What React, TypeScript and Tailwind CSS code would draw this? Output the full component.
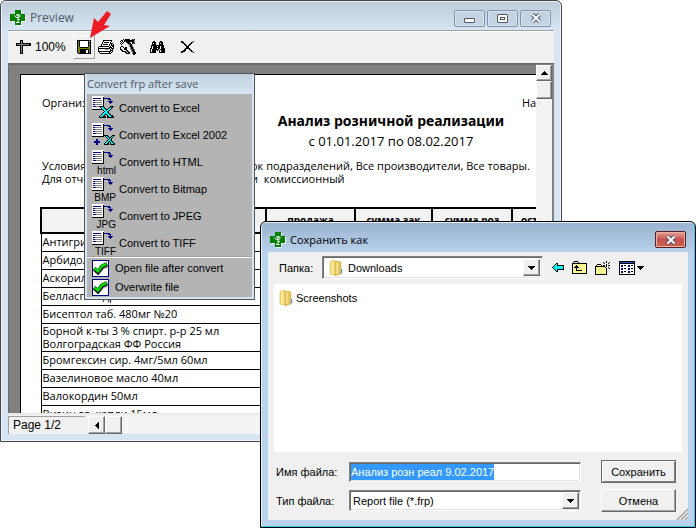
import type { ReactNode } from "react";

const COLORS: Record<string, string> = {
  k: "#000000",
  w: "#ffffff",
  g: "#808080",
  l: "#ffffc0",
  o: "#808000",
  n: "#000080",
  c: "#00ffff",
  t: "#008080",
  y: "#fff266",
  b: "#0a5bd0",
};

function PixelIcon({ rows, className }: { rows: string[]; className?: string }) {
  const width = Math.max(...rows.map((row) => row.length));
  return (
    <svg
      width={width}
      height={rows.length}
      viewBox={`0 0 ${width} ${rows.length}`}
      shapeRendering="crispEdges"
      aria-hidden="true"
      className={className}
    >
      {rows.flatMap((row, y) =>
        [...row].map((key, x) =>
          COLORS[key] ? (
            <rect key={`${x}-${y}`} x={x} y={y} width="1" height="1" fill={COLORS[key]} />
          ) : null,
        ),
      )}
    </svg>
  );
}

const RULER = [
  "....kkk........",
  "....kgk........",
  "....kgk........",
  "kkkkkgkkkkkkkkk",
  "kggggggggggggkk",
  "kkkkkgkkkkkkkkk",
  "....kgk........",
  "....kgk........",
  "....kgk........",
  "....kgk........",
  "....kgk........",
  "....kgk........",
  "....kgk........",
  "....kkk........",
];

const FLOPPY = [
  "kkkkkkkkkkkkkk",
  "kokwwwwwwwwkwk",
  "kokwwwwwwwwkkk",
  "kokwwwwwwwwkok",
  "kokwwwwwwwwkok",
  "kokwwwwwwwwkok",
  "kokwwwwwwwwkok",
  "kookkkkkkkkook",
  "kooooooooooook",
  "kookkkkkkkkkok",
  "kookkkkkkwwkok",
  "kookkkkkkwwkok",
  "kookkkkkkwwkok",
  ".kkkkkkkkkkkkk",
];

const PRINTER = [
  ".....kkkkkkkkk..",
  ".....kwwwwwwwk..",
  "....kwkkkkkwk...",
  "....kwwwwwwwkkk.",
  "...kwkkkkkwkwkwk",
  "...kwwwwwwwkwkkk",
  ".kkkkkkkkkkwkwkk",
  "kwwwwwwwwwwkkkwk",
  "kkkkkkkkkkkkwkkk",
  "kwwwwwwgggwwkwk.",
  "kwwwwwwwwwwwkkk.",
  "kkkkkkkkkkkkkwk.",
  ".kwwwwwwwwwkwk..",
  "..kkkkkkkkkkk...",
];

const TOOLS = [
  "...k.kkkkk..kgk.",
  ".kk.kkkkkkkkkkg.",
  "k.k.kgkkkkkkkkg.",
  ".k.k..gkkk..kkg.",
  "k.k....gkkk.kgk.",
  ".k......ggkk....",
  ".........gkkg...",
  ".kk......gkkg...",
  "k..k.kk...gkkg..",
  "k...kkk...gkkg..",
  "kk..kkk...ggkkg.",
  ".kk...kk...gkkg.",
  "..kkkk.kk..ggkk.",
  ".....kk.kk..gkkk",
  "......kkkk..gkkk",
  ".............kk.",
];

const BINOCULARS = [
  "...kk.....kk...",
  "..kkkk...kkkk..",
  "..kwkk...kwkk..",
  "..kkkk...kkkk..",
  ".kkkkkkkkkkkkk.",
  ".kwkkkkwkkwkkk.",
  ".kwkkkkkkkwkkk.",
  "kkwkkkkwkkwkkkk",
  "kwkkkkkkkwkkkkk",
  "kwkkkk.k.kwkkkk",
  "kwkkkk...kwkkkk",
  "kkkkkk...kkkkkk",
];

const CROSS = [
  "kk..........k",
  "kkk.......kk.",
  "..kk.....kk..",
  "...kk...kk...",
  "....kk.kk....",
  ".....kkk.....",
  ".....kkk.....",
  "....kkkkk....",
  "...kk...kk...",
  "..kkk....kk..",
  "kkkk......kk.",
  "kk..........k",
];

const PAGE_ARROW = [
  "wwwwwwwwwwww..........",
  "wwwwwwwwwwwk..........",
  "wnnnnnnnnwwknnnnnn....",
  "wwwwwwwwwwwk....nnn...",
  "wnngggggggwk......n...",
  "wwwwwwwwwwwk....nnnnn.",
  "wnngggggggwk.....nnn..",
  "wwwwwwwwwwwk......n...",
  "wnngggggggwk..........",
  "wwwwwwwwwwwk..........",
  "wnnnggggggwk..........",
  "wwwwwwwwwwwk..........",
  "wwwwwwwwwwwk..........",
  "kkkkkkkkkkkk..........",
];

const EXCEL = [
  "kkkkk......kkkk",
  ".kcctk....kttk.",
  "..kcctk..kcck..",
  "...kcctkkcck...",
  "....kcctcck....",
  ".....kcctk.....",
  "....kccctk.....",
  "...kcctcctk....",
  "..kcctkkcctk...",
  ".kcctk..kcctkk.",
  "kcctkkk.kkcctkk",
  "kkkkkkk.kkkkkkk",
];

const EXCEL_SMALL = [
  "kkkk....kkk",
  ".kctk..kck.",
  "..kctkkck..",
  "...kctck...",
  "....kctk...",
  "...kcctk...",
  "..kctkctk..",
  ".kcck.kctk.",
  "kcckk.kcctk",
  "kkkkk.kkkkk",
];

const PLUS = ["..nn..", "..nn..", "nnnnnn", "nnnnnn", "..nn..", "..nn.."];

const BACK = [
  "....kk......",
  "...kck......",
  "..kcckkkkkkk",
  ".kccccccccck",
  "kcccccccccck",
  ".kccccccccck",
  "..kcckkkkkkk",
  "...kck......",
  "....kk......",
];

const FOLDER_UP = [
  "..kkkk.........",
  ".kylylk........",
  "kkkkkkkkkkkkkkk",
  "kylylylylylylyk",
  "klylklylylylylk",
  "kylkkkylylylylk",
  "klkkkkklylylylk",
  "kylykylylylylyk",
  "klylklylylylyyk",
  "kylykkkkkkylylk",
  "klylylylylylylk",
  "kylylylylylylyk",
  "kkkkkkkkkkkkkkk",
];

const FOLDER_NEW = [
  "...........k....",
  "........k..k..k.",
  ".........k...k..",
  "..kkkk.....k....",
  ".kylylk.kk.k.kk.",
  "kkkkkkkkkk.k....",
  "kylylylylyk..k..",
  "klylylylylyk..k.",
  "kylylylylylk....",
  "klylylylylyk....",
  "kylylylylylk....",
  "klylylylylyk....",
  "kylylylylylk....",
  "kkkkkkkkkkkk....",
];

const DETAILS = [
  "kkkkkkkkkkkkkkkk",
  "kbbbbbbbbbbbbbbk",
  "kkkkkkkkkkkkkkkk",
  "kwwwwwwwwwwwwwwk",
  "kwnnwkkwwnnwkkwk",
  "kwnnwwwwwnnwwwwk",
  "kwwwwwwwwwwwwwwk",
  "kwnnwkkwwnnwkkwk",
  "kwnnwwwwwnnwwwwk",
  "kwwwwwwwwwwwwwwk",
  "kwnnwkkwwnnwkkwk",
  "kwnnwwwwwnnwwwwk",
  "kwwwwwwwwwwwwwwk",
  "kkkkkkkkkkkkkkkk",
];

const DOWN = ["kkkkkkk", ".kkkkk.", "..kkk..", "...k..."];
const UP = ["...k...", "..kkk..", ".kkkkk.", "kkkkkkk"];
const LEFT = ["...k", "..kk", ".kkk", "kkkk", ".kkk", "..kk", "...k"];

function AppIcon() {
  return (
    <svg width="16" height="16" viewBox="0 0 16 16" aria-hidden="true" className="shrink-0">
      <path d="M6 1h6v4h4v7h-4v4H6v-4H1V5h5z" fill="#fff" />
      <path d="M5 0h6v4h4v7h-4v4H5v-4H0V4h5z" fill="#008000" />
      <path d="M4.5 5.5 6 7.5h3l1.5-2M8 4v9M6 12.5h3.5M6 5h4M8 9.5h2" stroke="#fff" fill="none" />
    </svg>
  );
}

function FolderIcon() {
  return (
    <svg width="14" height="16" viewBox="0 0 14 16" aria-hidden="true" className="shrink-0">
      <path d="M1 1.5 5 0l1.5 1v14.5L1 14z" fill="#f3dc7e" stroke="#d9b64c" strokeWidth=".6" />
      <path d="M6 1.5h5l1 1V14l-5.5 1.5z" fill="#e7c65c" stroke="#cfa83c" strokeWidth=".6" />
      <path d="M3 1.5v12M8 2.5V14" stroke="#fdf3b8" />
      <path d="M12.5 9v4.5" stroke="#5b9bd5" strokeWidth="1.4" />
    </svg>
  );
}

function CheckMark() {
  return (
    <svg
      width="15"
      height="13"
      viewBox="0 0 15 13"
      aria-hidden="true"
      className="pointer-events-none absolute top-0.5 left-px"
    >
      <path d="m2 8.5 3 3 5-6L14.5 4" stroke="#808080" strokeWidth="3" fill="none" />
      <path d="m1 6.5 4 3.5 4-5.5L14 2" stroke="#000" strokeWidth="4" fill="none" />
      <path d="m1.5 6.5 3.5 3 4-5.5 4.5-2" stroke="#00e000" strokeWidth="2.5" fill="none" />
    </svg>
  );
}

const raised =
  "border border-t-white border-l-white border-r-[#696969] border-b-[#696969] bg-[#f0f0f0] shadow-[inset_-1px_-1px_0_#a0a0a0]";
const raisedDefault =
  "border border-[#696969] bg-[#f0f0f0] shadow-[inset_1px_1px_0_#ffffff,inset_-1px_-1px_0_#808080]";
const sunken =
  "border border-t-[#808080] border-l-[#808080] border-r-white border-b-white bg-white shadow-[inset_1px_1px_0_#696969,inset_-1px_-1px_0_#e3e3e3]";
const track =
  "bg-[conic-gradient(#ffffff_25%,#ececec_0_50%,#ffffff_0_75%,#ececec_0)] bg-[length:2px_2px]";

function CaptionButton({ label, children }: { label: string; children: ReactNode }) {
  return (
    <button
      type="button"
      aria-label={label}
      className="flex h-[17px] w-[31px] items-center justify-center rounded-xs border border-[#8391ad] bg-[#c6d3e2] shadow-[inset_0_0_0_1px_#d8e3ef]"
    >
      {children}
    </button>
  );
}

function CloseGlyph() {
  return (
    <svg width="12" height="10" viewBox="0 0 12 10" aria-hidden="true">
      <path d="m2.5 1.5 7 7m0-7-7 7" stroke="#50566b" strokeWidth="4" />
      <path d="m2.5 1.5 7 7m0-7-7 7" stroke="#fff" strokeWidth="2" />
    </svg>
  );
}

const products = [
  "Антигрип",
  "Арбидол",
  "Аскорил",
  "Белласпон др. № 30",
  "Бисептол таб. 480мг №20",
  "Борной к-ты 3 % спирт. р-р 25 мл\nВолгоградская ФФ Россия",
  "Бромгексин сир. 4мг/5мл 60мл",
  "Вазелиновое масло 40мл",
  "Валокордин 50мл",
  "Визин гл. капли 15мл",
];

function Report() {
  return (
    <article className="mt-[9px] ml-[11px] w-[640px] border-t border-l border-black bg-white pt-[21px] pl-[19px] font-['Open_Sans',sans-serif] text-[11px] leading-[13px]">
      <div className="flex pl-0.5">
        <span className="w-[480px]">Организа</span>
        <span>На</span>
      </div>
      <div className="mt-0.5 w-[702px] text-center">
        <h1 className="font-['Noto_Sans',sans-serif] text-[14px] leading-5 font-bold">
          Анализ розничной реализации
        </h1>
        <p className="text-[13px] leading-5">с 01.01.2017 по 08.02.2017</p>
      </div>
      <div className="mt-2 grid grid-cols-[209px_auto] pl-0.5 whitespace-pre">
        <span>Условия</span>
        <span>ок подразделений, Все производители, Все товары.</span>
        <span>Для отчет</span>
        <span>и{"  "}комиссионный</span>
      </div>
      <table className="mt-[22px] w-[560px] table-fixed border-collapse">
        <thead>
          <tr className="h-[25px] bg-[#f2f2f2] text-[10px]">
            <th className="w-[225px] border-2 border-black" />
            <th className="w-[89px] border-2 border-black">продажа</th>
            <th className="w-[77px] border-2 border-black">сумма зак</th>
            <th className="w-[80px] border-2 border-black">сумма роз</th>
            <th className="border-2 border-black pl-2 text-left">остаток</th>
          </tr>
        </thead>
        <tbody>
          {products.map((name) => (
            <tr key={name} className="h-[18px]">
              <td className="border border-black pb-px pl-px whitespace-pre">{name}</td>
              <td className="border border-black" />
              <td className="border border-black" />
              <td className="border border-black" />
              <td className="border border-black" />
            </tr>
          ))}
        </tbody>
      </table>
    </article>
  );
}

function ToolButton({ label, children }: { label: string; children: ReactNode }) {
  return (
    <button type="button" aria-label={label} className="flex h-6 items-center">
      {children}
    </button>
  );
}

function PreviewWindow() {
  return (
    <section className="absolute top-0 right-[134px] bottom-[86px] left-0 flex flex-col rounded-t-md border border-[#45454d] bg-[#d7e4f2] px-[7px] pb-[7px] shadow-[inset_0_0_0_1px_#eef4fa]">
      <header className="-mx-1.5 mt-px flex h-7 shrink-0 items-center rounded-t-sm bg-linear-to-b from-[#bfcddb] to-[#d7e4f2] pt-1 pr-[9px] pl-2">
        <AppIcon />
        <h2 className="ml-1 flex-1 font-['Open_Sans',sans-serif] text-[12px] leading-4 text-[#505a66]">
          Preview
        </h2>
        <div className="flex gap-0.5">
          <CaptionButton label="Minimize">
            <span className="mt-1 h-[5px] w-[11px] rounded-[1px] border border-[#50566b] bg-white" />
          </CaptionButton>
          <CaptionButton label="Maximize">
            <span className="flex h-[9px] w-[11px] items-center justify-center rounded-[1px] border border-[#50566b] bg-white">
              <span className="h-[3px] w-[5px] border border-[#50566b]" />
            </span>
          </CaptionButton>
          <CaptionButton label="Close">
            <CloseGlyph />
          </CaptionButton>
        </div>
      </header>
      <div className="flex h-[33px] shrink-0 items-center border-t border-[#a0a0a0] bg-[#f0f0f0] pl-2 shadow-[inset_0_1px_0_#ffffff]">
        <ToolButton label="Zoom">
          <PixelIcon rows={RULER} />
          <span className="ml-1 w-[38px] text-left text-[12px]">100%</span>
        </ToolButton>
        <button
          type="button"
          aria-label="Save"
          className="flex h-6 w-[22px] items-center justify-center border border-t-white border-r-[#a0a0a0] border-b-[#a0a0a0] border-l-white"
        >
          <PixelIcon rows={FLOPPY} />
        </button>
        <div className="ml-[3px] flex items-center">
          <ToolButton label="Print">
            <PixelIcon rows={PRINTER} className="mr-1.5" />
          </ToolButton>
          <ToolButton label="Page settings">
            <PixelIcon rows={TOOLS} className="mr-3.5" />
          </ToolButton>
          <ToolButton label="Find">
            <PixelIcon rows={BINOCULARS} className="mr-4" />
          </ToolButton>
          <ToolButton label="Close preview">
            <PixelIcon rows={CROSS} />
          </ToolButton>
        </div>
      </div>
      <div className="flex min-h-0 flex-1 border-t border-l border-[#696969] bg-[#808080]">
        <div className="min-w-0 flex-1 overflow-hidden border-t border-[#696969]">
          <Report />
        </div>
        <div className={`mt-px mr-0.5 flex w-4 flex-col ${track}`}>
          <button
            type="button"
            aria-label="Scroll up"
            className={`flex h-4 items-center justify-center ${raised}`}
          >
            <PixelIcon rows={UP} />
          </button>
          <div className={`h-[18px] ${raised}`} />
        </div>
      </div>
      <footer className="flex h-[21px] shrink-0 border-t border-[#e3e3e3] bg-[#f0f0f0] pt-0.5">
        <span className="w-[77px] border-t border-l border-[#a0a0a0] pl-1 text-[12px] leading-4">
          Page 1/2
        </span>
        <div className={`ml-[3px] flex flex-1 ${track}`}>
          <button
            type="button"
            aria-label="Scroll left"
            className={`flex w-[17px] items-center justify-center ${raised}`}
          >
            <PixelIcon rows={LEFT} />
          </button>
          <div className={`w-[17px] ${raised}`} />
        </div>
      </footer>
    </section>
  );
}

function FormatIcon({ tag }: { tag: string }) {
  return (
    <span className="relative h-6 w-6 shrink-0">
      <PixelIcon rows={PAGE_ARROW} />
      {tag === "xls" && <PixelIcon rows={EXCEL} className="absolute top-2.5 left-[7px]" />}
      {tag === "xls2" && (
        <>
          <PixelIcon rows={PLUS} className="absolute bottom-0.5 left-0.5" />
          <PixelIcon rows={EXCEL_SMALL} className="absolute right-px bottom-0.5" />
        </>
      )}
      {!tag.startsWith("xls") && (
        <span className="absolute right-0 -bottom-0.5 text-[10px] leading-[10px]">{tag}</span>
      )}
    </span>
  );
}

const formats = [
  { tag: "xls", label: "Convert to Excel" },
  { tag: "xls2", label: "Convert to Excel 2002" },
  { tag: "html", label: "Convert to HTML" },
  { tag: "BMP", label: "Convert to Bitmap" },
  { tag: "JPG", label: "Convert to JPEG" },
  { tag: "TIFF", label: "Convert to TIFF" },
];

function ConvertMenu() {
  return (
    <section className="absolute top-[73px] left-[84px] w-[171px] border border-[#50545c] bg-[#d7e4f2] p-0.5 pt-0">
      <h2 className="bg-linear-to-b from-[#c3d0de] to-[#d7e4f2] font-['Open_Sans',sans-serif] text-[11px] leading-5 text-[#505a66]">
        Convert frp after save
      </h2>
      <div className="bg-[#b4b4b4] pb-px">
        {formats.map(({ tag, label }) => (
          <button
            key={tag}
            type="button"
            className="flex h-[27px] w-full items-center gap-[3px] pl-[5px] text-left"
          >
            <FormatIcon tag={tag} />
            {label}
          </button>
        ))}
        <div className="mb-px border-t border-b border-t-[#a0a0a0] border-b-white" />
        {["Open file after convert", "Overwrite file"].map((label) => (
          <label key={label} className="mt-px flex h-[18px] items-center gap-1.5 pl-[5px]">
            <span className="relative size-[17px]">
              <input
                type="checkbox"
                defaultChecked
                className="block size-[17px] appearance-none border border-[#000080] bg-white"
              />
              <CheckMark />
            </span>
            {label}
          </label>
        ))}
      </div>
    </section>
  );
}

function Pointer() {
  return (
    <svg
      width="24"
      height="29"
      viewBox="0 0 24 29"
      aria-hidden="true"
      className="absolute top-[10px] left-[89px]"
    >
      <path d="M1 28 5 8l4 4L18 1l4 3-7 11 6 1z" fill="#ed1c24" />
    </svg>
  );
}

function ComboArrow() {
  return (
    <span
      className={`pointer-events-none flex w-[17px] items-center justify-center self-stretch ${raised}`}
    >
      <PixelIcon rows={DOWN} />
    </span>
  );
}

function SaveDialog() {
  return (
    <section className="absolute top-[221px] right-0 bottom-0 left-[260px] flex flex-col rounded-t-md border border-black bg-[#bad2eb] px-[7px] pb-[7px] shadow-[inset_-1px_-1px_0_#35c5ea,inset_1px_1px_0_#e8f1fa]">
      <header className="-mx-1.5 mt-px flex h-[29px] shrink-0 items-center rounded-t-sm bg-linear-to-b from-[#99b4d1] to-[#b9d1ea] pt-1 pr-2 pl-2">
        <AppIcon />
        <h2 className="ml-1 flex-1 font-['Open_Sans',sans-serif] text-[11px] leading-4 text-black">
          Сохранить как
        </h2>
        <button
          type="button"
          aria-label="Закрыть"
          className="flex h-[17px] w-[31px] items-center justify-center rounded-xs border border-[#5a1d1d] bg-linear-to-b from-[#e3a496] via-[#c75050] via-50% to-[#c9604a] shadow-[inset_0_0_0_1px_#e9b3a8]"
        >
          <CloseGlyph />
        </button>
      </header>
      <form className="relative flex min-h-0 flex-1 flex-col bg-[#f0f0f0] px-1.5 pt-1 pb-2">
        <div className="flex h-[23px] shrink-0 items-center">
          <label htmlFor="folder" className="w-12 pl-[5px]">
            Папка:
          </label>
          <div className={`flex h-[23px] flex-1 items-center p-0.5 pl-1.5 ${sunken}`}>
            <FolderIcon />
            <select id="folder" className="ml-[5px] flex-1 appearance-none outline-none">
              <option>Downloads</option>
            </select>
            <ComboArrow />
          </div>
          <div className="flex w-[139px] items-center gap-2 pl-[9px]">
            <button type="button" aria-label="Назад">
              <PixelIcon rows={BACK} />
            </button>
            <button type="button" aria-label="На один уровень вверх">
              <PixelIcon rows={FOLDER_UP} />
            </button>
            <button type="button" aria-label="Новая папка">
              <PixelIcon rows={FOLDER_NEW} />
            </button>
            <button type="button" aria-label="Вид" className="flex items-center gap-0.5">
              <PixelIcon rows={DETAILS} />
              <PixelIcon rows={DOWN} />
            </button>
          </div>
        </div>
        <ul className="mt-[5px] min-h-0 flex-1 bg-white pt-1.5 pl-[5px]">
          <li className="flex items-center gap-[3px]">
            <FolderIcon />
            Screenshots
          </li>
        </ul>
        <div className="mt-2 grid shrink-0 grid-cols-[75px_1fr_75px] items-center gap-y-1.5 pr-1.5">
          <label htmlFor="file-name" className="pl-0.5">
            Имя файла:
          </label>
          <div className={`mr-5 h-5 p-px ${sunken}`}>
            <input
              id="file-name"
              defaultValue="Анализ розн реал 9.02.2017"
              className="block h-4 field-sizing-content bg-[#3399ff] text-white outline-none"
            />
          </div>
          <button type="submit" className={`h-[23px] ${raisedDefault}`}>
            Сохранить
          </button>
          <label htmlFor="file-type" className="pl-0.5">
            Тип файла:
          </label>
          <div className={`mr-5 flex h-[21px] p-px ${sunken}`}>
            <select id="file-type" className="flex-1 appearance-none pl-0.5 outline-none">
              <option>Report file (*.frp)</option>
            </select>
            <ComboArrow />
          </div>
          <button type="button" className={`h-[23px] ${raised}`}>
            Отмена
          </button>
        </div>
        <svg
          width="12"
          height="12"
          viewBox="0 0 12 12"
          aria-hidden="true"
          className="absolute right-0 bottom-0"
        >
          <path d="M1 12 12 1M5 12l7-7M9 12l3-3" stroke="#a0a0a0" strokeWidth="1.5" />
        </svg>
      </form>
    </section>
  );
}

export default function App() {
  return (
    <main className="relative h-screen min-h-[400px] overflow-hidden bg-white font-['Liberation_Sans',Arial,sans-serif] text-[11px] leading-4 text-black">
      <PreviewWindow />
      <Pointer />
      <ConvertMenu />
      <SaveDialog />
    </main>
  );
}
